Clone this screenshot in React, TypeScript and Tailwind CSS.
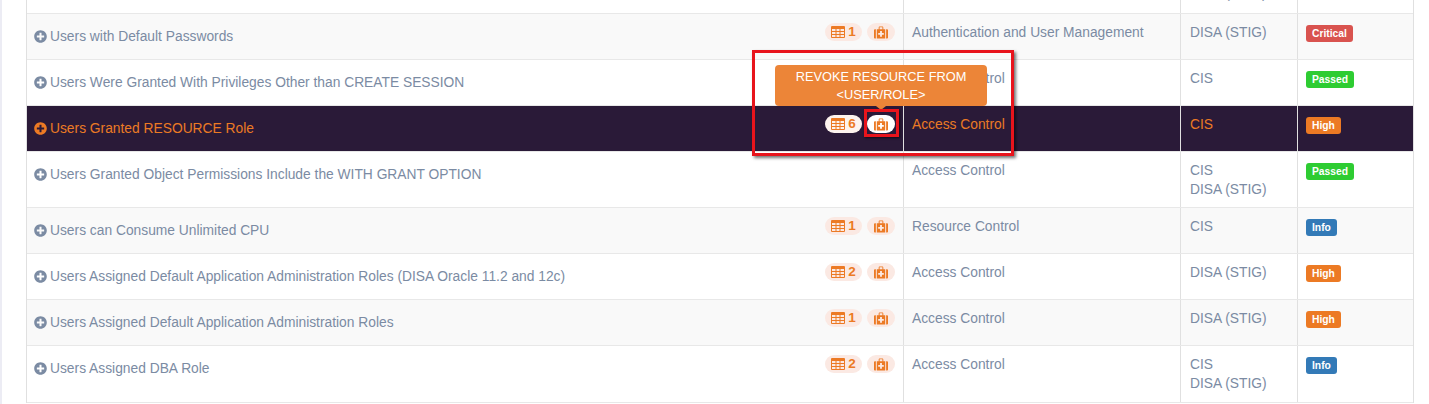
import { FaPlusCircle } from 'react-icons/fa';

type Row = {
  title: string;
  count?: number;
  fix?: boolean;
  category: string;
  standards: string[];
  severity: 'Critical' | 'Passed' | 'High' | 'Info';
  height: string;
  active?: boolean;
  striped?: boolean;
};

const rows: Row[] = [
  { title: 'Users with Default Passwords', count: 1, fix: true, category: 'Authentication and User Management', standards: ['DISA (STIG)'], severity: 'Critical', height: 'h-[46px]', striped: true },
  { title: 'Users Were Granted With Privileges Other than CREATE SESSION', category: 'Access Control', standards: ['CIS'], severity: 'Passed', height: 'h-[46px]' },
  { title: 'Users Granted RESOURCE Role', count: 6, fix: true, category: 'Access Control', standards: ['CIS'], severity: 'High', height: 'h-[46px]', active: true },
  { title: 'Users Granted Object Permissions Include the WITH GRANT OPTION', category: 'Access Control', standards: ['CIS', 'DISA (STIG)'], severity: 'Passed', height: 'h-[56px]' },
  { title: 'Users can Consume Unlimited CPU', count: 1, fix: true, category: 'Resource Control', standards: ['CIS'], severity: 'Info', height: 'h-[46px]', striped: true },
  { title: 'Users Assigned Default Application Administration Roles (DISA Oracle 11.2 and 12c)', count: 2, fix: true, category: 'Access Control', standards: ['DISA (STIG)'], severity: 'High', height: 'h-[46px]' },
  { title: 'Users Assigned Default Application Administration Roles', count: 1, fix: true, category: 'Access Control', standards: ['DISA (STIG)'], severity: 'High', height: 'h-[46px]', striped: true },
  { title: 'Users Assigned DBA Role', count: 2, fix: true, category: 'Access Control', standards: ['CIS', 'DISA (STIG)'], severity: 'Info', height: 'h-[57px]' },
];

const severityClass = {
  Critical: 'bg-[#d9534f]',
  Passed: 'bg-[#2ecc32]',
  High: 'bg-[#ec7a24]',
  Info: 'bg-[#337ab7]',
};

// Font Awesome 4 style table: header bar plus a 3x3 grid of cells
function TableIcon() {
  return (
    <svg width="14" height="12" viewBox="0 0 14 12" fill="currentColor">
      <path
        fillRule="evenodd"
        d="M1 0h12a1 1 0 0 1 1 1v10a1 1 0 0 1-1 1H1a1 1 0 0 1-1-1V1a1 1 0 0 1 1-1zM1 3v2h3.5V3zm4.5 0v2h3V3zm4 0v2H13V3zM1 6v2h3.5V6zm4.5 0v2h3V6zm4 0v2H13V6zM1 9v2h3.5V9zm4.5 0v2h3V9zm4 0v2H13V9z"
      />
    </svg>
  );
}

function MedkitIcon() {
  return (
    <svg width="14" height="13" viewBox="0 0 15 13" fill="currentColor">
      <path
        fillRule="evenodd"
        d="M5 3V1.2C5 .5 5.5 0 6.2 0h2.6C9.500 0 10 .5 10 1.2V3h-1V1H6v2zM0 4.2C0 3.500.5 3 1.2 3H2v10h-.8C.5 13 0 12.500 0 11.800zM3 3h9v10H3zm3.500 2v2h-2v2h2v2h2V9h2V7h-2V5zM13 3h.8c.7 0 1.200.5 1.200 1.200v7.600c0 .7-.5 1.200-1.200 1.200H13z"
      />
    </svg>
  );
}

function Pills({ row }: { row: Row }) {
  const pill = row.active ? 'bg-[#fdf3ee]' : 'bg-[#fbe9e3]';
  const fix = row.active ? 'bg-white' : 'bg-[#fbe9e3]';
  return (
    <div className="flex items-center gap-[5px] text-[#ec7a24]">
      <span className={`flex h-[18px] w-[37px] items-center justify-center gap-[3px] rounded-full text-[13.5px] font-bold ${pill}`}>
        <TableIcon />
        {row.count}
      </span>
      <span className={`flex h-[18px] w-[28px] items-center justify-center rounded-full ${fix}`}>
        <MedkitIcon />
      </span>
    </div>
  );
}

function TableRow({ row }: { row: Row }) {
  const tone = row.active
    ? 'bg-[#2a1a38] text-[#ec7a24]'
    : row.striped
      ? 'bg-[#f9f9f9] text-[#7b8ba3]'
      : 'bg-white text-[#7b8ba3]';
  return (
    <div className={`grid grid-cols-[876px_277px_117px_117px] border-b border-[#e8e8e8] ${row.height} ${tone}`}>
      <div className="flex items-start justify-between pl-[7px] pr-[8px]">
        <div className="flex items-center gap-[3px] pt-[13px]">
          <FaPlusCircle size={13} className="-translate-y-px" />
          <span>{row.title}</span>
        </div>
        {row.fix && (
          <div className="pt-[9px]">
            <Pills row={row} />
          </div>
        )}
      </div>
      <div className="border-l border-[#e0e0e0] pl-[8px] pt-[9px]">{row.category}</div>
      <div className="border-l border-[#e0e0e0] pl-[9px] pt-[9px] leading-[19px]">
        {row.standards.map((s) => (
          <div key={s}>{s}</div>
        ))}
      </div>
      <div className="border-l border-[#e0e0e0] pl-[8px] pt-[11px]">
        <span className={`inline-block rounded-[3px] px-[6px] py-[2px] align-top text-[10.3px] font-bold leading-[13px] text-white ${severityClass[row.severity]}`}>
          {row.severity}
        </span>
      </div>
    </div>
  );
}

export default function App() {
  return (
    <div className="relative h-[404px] w-[1429px] overflow-hidden bg-white font-['Liberation_Sans',sans-serif] text-[13.8px] leading-[20px]">
      <div className="flex h-full">
        <div className="h-full w-[2px] bg-[#ececf4]" />
        <div className="ml-[24px] w-[1388px] self-start border-x border-[#e0e0e0]">
          {/* row cut off by the top of the screenshot */}
          <div className="grid h-[14px] grid-cols-[876px_277px_117px_117px] items-end overflow-hidden border-b border-[#e8e8e8] text-[#7b8ba3]">
            <div />
            <div className="h-full border-l border-[#e0e0e0]" />
            <div className="h-full border-l border-[#e0e0e0] pl-[9px]">
              <div className="-mt-[16px]">DISA (STIG)</div>
            </div>
            <div className="h-full border-l border-[#e0e0e0]" />
          </div>
          {rows.map((row) => (
            <TableRow key={row.title} row={row} />
          ))}
        </div>
      </div>

      {/* annotation box and tooltip drawn over the table */}
      <div className="absolute left-[752px] top-[50px] h-[106px] w-[262px] border-[3px] border-[#e8141c] shadow-[2px_2px_3px_rgba(0,0,0,0.55)]" />
      <div className="absolute left-[775px] top-[65px] flex h-[41px] w-[212px] items-center justify-center rounded-[4px] bg-[#ec8538] text-center text-[12.8px] leading-[18px] text-white">
        <div>
          REVOKE RESOURCE FROM
          <br />
          {'<USER/ROLE>'}
        </div>
      </div>
      <div className="absolute left-[876px] top-[106px] h-0 w-0 border-x-[5px] border-t-[4px] border-x-transparent border-t-[#ec8538]" />
      <div className="absolute left-[864px] top-[109px] h-[28px] w-[35px] border-[3px] border-[#e8141c] shadow-[1px_1px_2px_rgba(0,0,0,0.6)]" />
    </div>
  );
}
